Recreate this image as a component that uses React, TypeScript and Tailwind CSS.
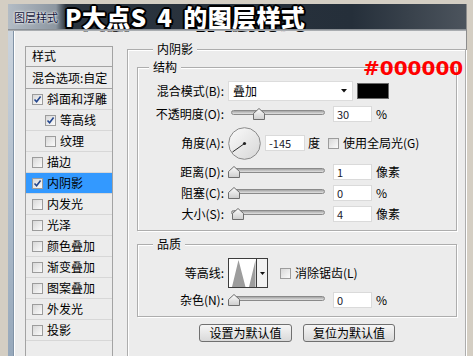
import clsx from 'clsx';
import type { ReactNode } from 'react';

const cjk = "font-['Noto_Sans_CJK_SC','Noto_Sans',sans-serif]";

function Check({ on }: { on?: boolean }) {
    return (
        <span className="flex h-[11px] w-[11px] shrink-0 items-center justify-center border border-[#9c9c9c] bg-gradient-to-br from-[#d8d8d8] to-[#fbfbfb]">
            {on && (
                <svg width="9" height="9" viewBox="0 0 9 9">
                    <path d="M1.5 4.5 L3.6 6.8 L7.6 1.6" fill="none" stroke="#23468e" strokeWidth="1.6" />
                </svg>
            )}
        </span>
    );
}

function Thumb() {
    return (
        <svg width="12" height="12" viewBox="0 0 12 12">
            <defs>
                <linearGradient id="thumbFill" x1="0" y1="0" x2="0" y2="1">
                    <stop offset="0" stopColor="#fdfdfd" />
                    <stop offset="1" stopColor="#cdcdcd" />
                </linearGradient>
            </defs>
            <path d="M6 0.5 L11.5 5.5 V11.5 H0.5 V5.5 Z" fill="url(#thumbFill)" stroke="#6e6e6e" />
        </svg>
    );
}

function Slider({ pos }: { pos: number }) {
    return (
        <div className="relative h-[18px] w-[97px]">
            <div className="absolute left-[3px] right-0 top-[5px] h-[5px] rounded-full border border-[#8a8a8a] bg-gradient-to-b from-[#a4a4a4] to-[#e2e2e2]" />
            <div className="absolute top-[3px] flex" style={{ left: pos }}>
                <Thumb />
            </div>
        </div>
    );
}

function Field({ value, w = 'w-[39px]' }: { value: string; w?: string }) {
    return (
        <div className={clsx('flex h-[16px] items-center border border-[#dadada] bg-white pl-[3px] text-[11px] text-[#1b1b2e]', w)}>
            {value}
        </div>
    );
}

function Row({ label, className, children }: { label: ReactNode; className?: string; children: ReactNode }) {
    return (
        <div className={clsx('flex items-center', className)}>
            <span className="w-[86px] whitespace-nowrap text-right">{label}</span>
            <div className="ml-[4px] flex items-center">{children}</div>
        </div>
    );
}

function SliderRow({ label, pos, value, unit, className }: { label: string; pos: number; value: string; unit: string; className?: string }) {
    return (
        <Row label={label} className={clsx('h-[18px]', className)}>
            <Slider pos={pos} />
            <div className="ml-[8px]">
                <Field value={value} />
            </div>
            <span className="ml-[4px]">{unit}</span>
        </Row>
    );
}

const styles = [
    { name: '斜面和浮雕', on: true },
    { name: '等高线', on: true, sub: true },
    { name: '纹理', sub: true },
    { name: '描边' },
    { name: '内阴影', on: true, active: true },
    { name: '内发光' },
    { name: '光泽' },
    { name: '颜色叠加' },
    { name: '渐变叠加' },
    { name: '图案叠加' },
    { name: '外发光' },
    { name: '投影' },
];

export default function App() {
    return (
        <div className={clsx('relative h-[356px] w-[473px] overflow-hidden bg-[#d4cec3] pl-[8px] pr-[6px] pt-[4px] text-[12px] leading-[16px] text-black', cjk)}>
            <div className="flex h-[360px] flex-col border-r border-[#8d8d8d] bg-[#ececec]">
                {/* title bar */}
                <div className="flex h-[25px] items-center bg-[linear-gradient(to_right,#b3bcc5_0px,#8c96a0_48px,#2b343e_58px,#252f3a_75%,#4c545d_100%)] pl-[6px]">
                    <span className="text-[11px] text-[#14163a] [text-shadow:0_0_3px_#fff,0_0_2px_#fff]">图层样式</span>
                    <span className="ml-[7px] whitespace-pre text-[24px] font-black leading-none tracking-[0.4px] text-white [word-spacing:5px] [text-shadow:-2px_0_#000,2px_0_#000,0_-2px_#000,0_2px_#000,-1.5px_-1.5px_#000,1.5px_1.5px_#000,-1.5px_1.5px_#000,1.5px_-1.5px_#000]">
                        P大点S 4 的图层样式
                    </span>
                </div>
                <div className="h-[2px] bg-gradient-to-b from-[#7b8187] to-[#b9bcbf]" />

                <div className="flex flex-1">
                    <div className="w-[6px] border-r border-[#8193a6] bg-gradient-to-b from-[#cbd4de] to-[#95a7ba]" />
                    <div className="flex flex-1 border-l border-white pl-[10px] pt-[10px]">
                        {/* styles list */}
                        <div className="mt-[5px] flex w-[88px] flex-col border border-[#a3a3a3]">
                            <div className="h-[20px] border-b border-[#a3a3a3] pl-[6px] pt-[1px]">样式</div>
                            <div className="flex h-[22px] items-center border-b border-[#a3a3a3] pl-[6px]">混合选项:自定</div>
                            {styles.map((s) => (
                                <div
                                    key={s.name}
                                    className={clsx(
                                        'flex h-[21px] items-center border-b border-[#d7d7d7]',
                                        s.sub ? 'pl-[19px]' : 'pl-[6px]',
                                        s.active && 'bg-[#3399ff]'
                                    )}
                                >
                                    <Check on={s.on} />
                                    <span className="ml-[4px] whitespace-nowrap">{s.name}</span>
                                </div>
                            ))}
                        </div>

                        {/* inner shadow panel */}
                        <fieldset className="ml-[14px] flex-1 border border-[#adadad] pl-[9px] pr-[8px] shadow-[inset_1px_1px_0_#fff,1px_1px_0_#fff]">
                            <legend className="ml-[16px] bg-[#ececec] px-[4px]">内阴影</legend>

                            <fieldset className="mt-[2px] border border-[#adadad] pb-[7px] shadow-[inset_1px_1px_0_#fff,1px_1px_0_#fff]">
                                <legend className="ml-[11px] bg-[#ececec] px-[4px]">结构</legend>

                                <Row label="混合模式(B):" className="mt-[6px] h-[20px]">
                                    <div className="flex h-[20px] w-[125px] items-center justify-between border border-[#dcdcdc] bg-white pl-[4px] pr-[5px]">
                                        <span>叠加</span>
                                        <svg width="6" height="4" viewBox="0 0 6 4">
                                            <path d="M0 0 H6 L3 3.5 Z" fill="#111" />
                                        </svg>
                                    </div>
                                    <div className="ml-[4px] h-[16px] w-[32px] border border-[#6a6a6a] bg-black" />
                                </Row>

                                <SliderRow label="不透明度(O):" pos={25} value="30" unit="%" className="mt-[4px]" />

                                <Row label="角度(A):" className="mt-[4px] h-[32px]">
                                    <svg width="33" height="33" viewBox="0 0 33 33">
                                        <defs>
                                            <linearGradient id="dialFill" x1="0" y1="0" x2="1" y2="1">
                                                <stop offset="0" stopColor="#fbfbfb" />
                                                <stop offset="1" stopColor="#d6d6d6" />
                                            </linearGradient>
                                        </defs>
                                        <circle cx="16.5" cy="16.5" r="15.8" fill="url(#dialFill)" stroke="#8a8a8a" />
                                        <line x1="16.5" y1="16.5" x2="4.5" y2="25" stroke="#2a2a2a" strokeWidth="1" />
                                        <circle cx="16.5" cy="16.5" r="1.6" fill="#222" />
                                    </svg>
                                    <div className="ml-[4px]">
                                        <Field value="-145" w="w-[40px]" />
                                    </div>
                                    <span className="ml-[3px]">度</span>
                                    <span className="ml-[8px]">
                                        <Check />
                                    </span>
                                    <span className="ml-[4px] whitespace-nowrap">使用全局光(G)</span>
                                </Row>

                                <SliderRow label="距离(D):" pos={0} value="1" unit="像素" className="mt-[4px]" />
                                <SliderRow label="阻塞(C):" pos={0} value="0" unit="%" className="mt-[3px]" />
                                <SliderRow label="大小(S):" pos={4} value="4" unit="像素" className="mt-[3px]" />
                            </fieldset>

                            <fieldset className="mt-[5px] border border-[#adadad] pb-[7px] shadow-[inset_1px_1px_0_#fff,1px_1px_0_#fff]">
                                <legend className="ml-[15px] bg-[#ececec] px-[4px]">品质</legend>

                                <Row label="等高线:" className="mt-[6px] h-[30px]">
                                    <div className="flex h-[30px] w-[40px] border border-[#3c3c3c] bg-white">
                                        <svg width="27" height="28" viewBox="0 0 27 28">
                                            <path d="M3 28 L9.5 1 L16.5 28 Z M20 28 L26.5 1 V28 Z" fill="#9d9d9d" />
                                        </svg>
                                        <div className="flex flex-1 items-center justify-center border-l border-[#3c3c3c] bg-[#f2f2f2]">
                                            <svg width="5" height="3" viewBox="0 0 5 3">
                                                <path d="M0 0 H5 L2.5 3 Z" fill="#111" />
                                            </svg>
                                        </div>
                                    </div>
                                    <span className="ml-[12px]">
                                        <Check />
                                    </span>
                                    <span className="ml-[4px] whitespace-nowrap">消除锯齿(L)</span>
                                </Row>

                                <SliderRow label="杂色(N):" pos={0} value="0" unit="%" className="mt-[3px]" />
                            </fieldset>

                            <div className="mt-[7px] flex justify-center gap-[11px]">
                                <button className="h-[18px] w-[93px] rounded-[3px] border border-[#707070] bg-gradient-to-b from-[#f6f6f6] to-[#d9d9d9] text-[12px] leading-[16px]">
                                    设置为默认值
                                </button>
                                <button className="h-[18px] w-[92px] rounded-[3px] border border-[#707070] bg-gradient-to-b from-[#f6f6f6] to-[#d9d9d9] text-[12px] leading-[16px]">
                                    复位为默认值
                                </button>
                            </div>
                        </fieldset>
                    </div>
                </div>
            </div>

            <span className="absolute left-[363px] top-[58px] font-['DejaVu_Sans',sans-serif] text-[20px] font-bold leading-none text-[#ff0000]">
                #000000
            </span>
        </div>
    );
}
